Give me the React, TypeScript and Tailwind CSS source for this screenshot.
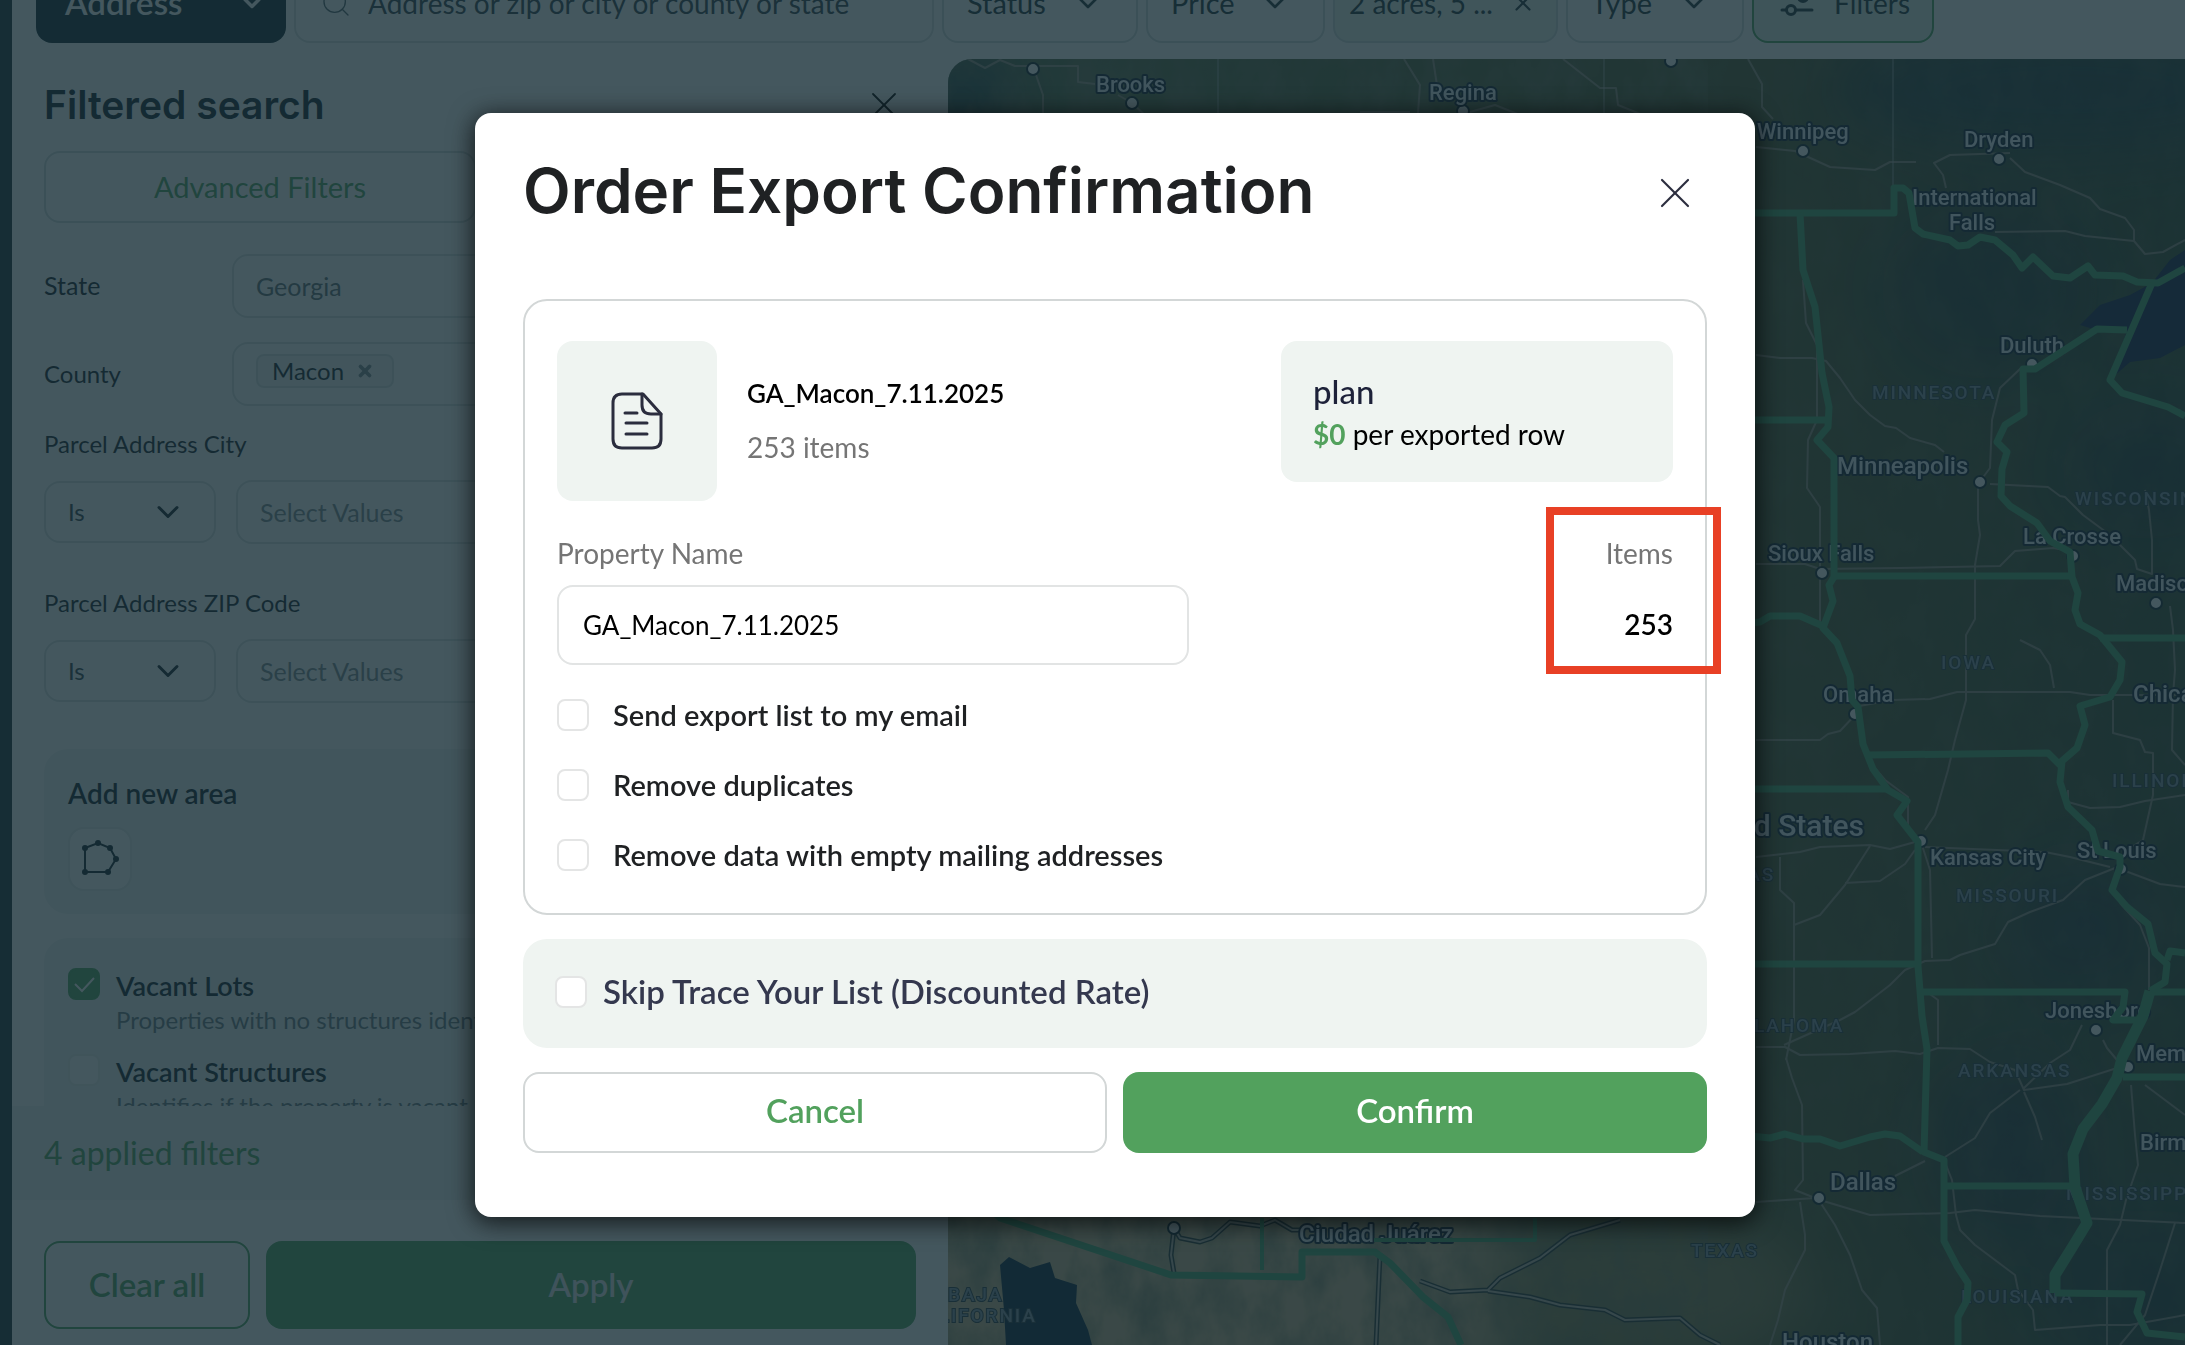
import React, { useState } from 'react';
import { ChevronDown, Search, X } from 'lucide-react';

const CITIES = [
  { name: 'Brooks', x: 1096, y: 92 },
  { name: 'Regina', x: 1429, y: 100 },
  { name: 'Winnipeg', x: 1757, y: 139 },
  { name: 'Dryden', x: 1964, y: 147 },
  { name: 'International', x: 1912, y: 205 },
  { name: 'Falls', x: 1949, y: 230 },
  { name: 'Duluth', x: 2000, y: 353 },
  { name: 'La Crosse', x: 2023, y: 544 },
  { name: 'Sioux Falls', x: 1768, y: 561 },
  { name: 'Madison', x: 2116, y: 591 },
  { name: 'Omaha', x: 1823, y: 702 },
  { name: 'Kansas City', x: 1930, y: 865 },
  { name: 'St Louis', x: 2077, y: 858 },
  { name: 'Jonesboro', x: 2045, y: 1018 },
  { name: 'Memphis', x: 2136, y: 1061 },
  { name: 'Birmingham', x: 2140, y: 1150 },
];

const BIG_CITIES = [
  { name: 'Minneapolis', x: 1837, y: 474 },
  { name: 'Chicago', x: 2133, y: 702 },
  { name: 'Dallas', x: 1830, y: 1190 },
  { name: 'Houston', x: 1782, y: 1350 },
  { name: 'Ciudad Juárez', x: 1299, y: 1242 },
];

const STATES = [
  { name: 'MINNESOTA', x: 1872, y: 399 },
  { name: 'WISCONSIN', x: 2075, y: 505 },
  { name: 'IOWA', x: 1941, y: 669 },
  { name: 'ILLINOIS', x: 2112, y: 787 },
  { name: 'MISSOURI', x: 1956, y: 902 },
  { name: 'KANSAS', x: 1690, y: 881 },
  { name: 'OKLAHOMA', x: 1725, y: 1032 },
  { name: 'ARKANSAS', x: 1958, y: 1077 },
  { name: 'MISSISSIPPI', x: 2066, y: 1200 },
  { name: 'LOUISIANA', x: 1961, y: 1303 },
  { name: 'TEXAS', x: 1691, y: 1257 },
  { name: 'BAJA', x: 948, y: 1301 },
  { name: 'CALIFORNIA', x: 910, y: 1322 },
];

const DOTS = [
  [1033, 69], [1132, 103], [1463, 111], [1671, 61], [1803, 151], [1999, 159], [2032, 364],
  [1980, 482], [2073, 556], [1822, 573], [2156, 603], [1855, 714], [1921, 841], [2121, 869],
  [2096, 1030], [2128, 1067], [1819, 1198], [1174, 1228],
];

const BORDERS = [
  'M1700 213H1894V188L1903 188L1909 193L1915 228L1923 234L1950 240L1958 246L1968 245L1980 237L1995 240L2013 255L2022 268L2033 257L2053 276L2070 278L2088 266L2095 275L2123 276L2137 282L2158 283L2185 268',
  'M2152 283L2110 380L2122 393L2168 407L2185 416',
  'M2127 330L2097 329L2035 369L2023 369L2024 413L2005 425L1997 442L2007 452L2002 469L2001 496L2010 506L2037 523L2050 541L2070 552L2072 577L2078 593L2075 610L2080 624L2100 635L2122 662L2120 680L2110 697L2080 706L2085 725L2077 748L2062 761L2060 782L2068 807L2092 830L2098 851L2120 857L2120 867L2112 890L2127 907L2148 924L2155 953L2167 964L2165 982L2150 991',
  'M1800 213L1803 270L1815 307L1822 373L1829 407L1828 427L1817 440L1834 458V577L1829 585L1833 601L1823 628L1837 643L1850 676L1852 700L1858 707L1863 744L1873 769L1888 790L1907 801L1897 815L1918 842V966L1922 1016L1927 1049L1924 1152L1944 1160V1241L1957 1266L1968 1283L1967 1300L1958 1317V1345',
  'M1700 420H1828M1834 576H2070M2100 638H2185',
  'M1740 624L1760 622L1770 616H1800L1823 626',
  'M1868 755L2048 753L2060 765M1700 789H1888M1700 964H1916',
  'M1920 992H2125L2123 1007L2113 1020H2140M2150 992H2185M2167 960L2170 951L2185 953M2123 1077H2185',
  'M1740 1135L1770 1138L1785 1134L1803 1139L1820 1139L1840 1146L1870 1137L1885 1134L1900 1136L1923 1152M1947 1186H2075',
  'M2055 1293L2142 1294L2137 1312L2147 1333L2185 1337',
  'M980 1200L1000 1218L1171 1275L1302 1277V1252H1375L1390 1263L1423 1297L1448 1317L1461 1345',
];

const RIVER = 'M2150 991L2143 1016L2122 1058L2117 1078L2102 1104L2083 1129L2073 1154L2075 1187L2087 1223L2073 1246L2055 1275V1293';

const ROADS = [
  'M968 59L985 68L1000 60L1015 66L1033 66H1078V82L1095 84M1036 75L1043 95V118M1118 95L1132 103L1148 118',
  'M1404 59L1420 85L1418 113M1433 59L1438 92M1563 59L1600 88H1616L1618 105L1650 118M1748 59L1762 84V107L1773 119',
  'M1360 112H1410M1470 112L1495 105L1520 115',
  'M1756 147L1795 151L1830 167L1875 170L1890 162L1916 162M2010 153L1950 155L1934 163L1943 175L1946 188M2010 158L2025 172L2060 185L2090 198L2100 209L2125 218L2134 230V241L2145 254L2163 252L2185 240M2134 241L2085 236L2065 231L1995 232',
  'M1756 355L1780 358H1812L1826 361L1840 378L1855 400L1870 415L1885 426L1896 428L1910 438L1935 445L1944 452M1803 280L1806 323L1817 345V420L1808 440L1807 488L1820 507L1820 625M1756 564H1805L1820 569L1900 568L2000 566L2015 551L2053 548L2070 551',
  'M2030 368L2020 369L2000 388L1992 420L1990 468L1978 484L1978 520L1980 535L1975 565V619L1966 635V700L1955 740L1948 770L1935 815L1925 830M1990 484L2048 487L2060 496L2065 497L2083 515L2110 535L2135 560L2137 569L2152 574V540L2149 510L2145 490',
  'M2020 640L2040 650L2050 665L2054 688M1854 707L1892 700L1930 699L1957 692L2070 692L2090 695H2185M2113 700V733L2140 740L2145 752L2153 753V795L2143 840L2130 848M2170 606L2173 630L2175 670L2173 695L2172 750L2185 765',
  'M1756 740H1820L1828 734L1840 731L1856 714M1868 760L1885 780L1908 797V830L1921 842L1930 870L1932 958M1756 857L1800 852L1820 847L1870 845L1890 849L1915 842M1780 857V890L1794 903V1020L1786 1060M1794 925L1820 915L1845 885L1870 846M1845 883L1880 881L1905 864L1915 850M1925 847L2045 852L2070 857L2110 867',
  'M2068 790V802L2090 808L2120 807L2145 801L2185 795M2120 866L2085 880L2063 900L2030 912L2008 922L1995 944L1960 955L1950 960L1925 961L1905 970L1890 985L1868 1002L1855 1012L1840 1020L1784 1045M2120 903L2140 925L2149 948V990M2120 869L2160 884L2185 887',
  'M1756 1047H1785L1800 1055L1850 1054L1895 1051L1920 1054L1938 1048L1970 1049L1990 1062L2015 1070L2024 1090L2067 1084L2117 1068M2024 1092L2035 1117L2042 1140M2020 1090L1990 1113L1975 1138L1945 1157M2024 1088L2050 1063L2070 1050L2082 1025M2103 1040L2107 1048L2117 1060M1927 992L1938 1000L1938 1045',
  'M1786 1058L1792 1078L1802 1105L1803 1180L1795 1190L1815 1198L1756 1202M1820 1202L1835 1225L1850 1255L1862 1290L1877 1308L1880 1345M1800 1202L1805 1235V1250L1785 1290L1778 1320L1770 1345M1820 1200L1870 1215L1950 1213L1975 1210L2040 1216L2185 1223M1944 1160L1952 1180L1956 1215L1960 1230L1975 1245L2015 1275L2018 1290L2033 1310L2035 1330L2100 1325L2130 1325L2185 1315M1895 1176L1925 1161',
  'M2131 1085L2135 1135L2138 1165L2126 1200L2120 1225L2107 1250V1345M2175 1223L2160 1270L2145 1315L2120 1345M2145 1085L2165 1100L2185 1115',
];

// drawn with a dark casing
const SOUTH_ROADS = [
  'M1174 1228L1171 1255L1174 1273M1174 1228L1180 1238L1200 1242L1212 1238L1230 1222L1260 1226L1275 1220L1292 1230H1300M1380 1255L1376 1345',
  'M1420 1281L1450 1292L1488 1290L1500 1278L1540 1258L1570 1235L1620 1220M1488 1291L1530 1297L1560 1305L1605 1310L1625 1320L1680 1318L1700 1335L1720 1345',
];

const MapView: React.FC = () => (
  <svg className="block h-full w-full" viewBox="948 59 1237 1286" preserveAspectRatio="xMinYMin slice">
    <defs>
      <linearGradient id="land" x1="0" y1="0" x2="1" y2="0">
        <stop offset="0" stopColor="#56704a" />
        <stop offset="0.65" stopColor="#50562e" />
        <stop offset="1" stopColor="#37492f" />
      </linearGradient>
      <filter id="haze" x="-30%" y="-30%" width="160%" height="160%">
        <feGaussianBlur stdDeviation="32" />
      </filter>
      <filter id="terrain" x="0" y="0" width="100%" height="100%">
        <feTurbulence type="fractalNoise" baseFrequency="0.03 0.018" numOctaves="5" seed="8" />
        <feColorMatrix values="0 0 0 0 0.15  0 0 0 0 0.17  0 0 0 0 0.1  2 0 0 0 -0.7" />
      </filter>
    </defs>
    <rect x="948" y="59" width="1237" height="1286" fill="url(#land)" />
    <g filter="url(#haze)">
      <ellipse cx="2060" cy="90" rx="230" ry="60" fill="#263c3c" />
      <ellipse cx="1990" cy="290" rx="110" ry="90" fill="#1c2e3a" opacity="0.5" />
      <ellipse cx="2150" cy="470" rx="90" ry="70" fill="#1c2e3a" opacity="0.5" />
      <ellipse cx="2080" cy="930" rx="80" ry="70" fill="#1c2e3a" opacity="0.6" />
      <ellipse cx="2010" cy="1150" rx="80" ry="100" fill="#1c2e3a" opacity="0.6" />
      <ellipse cx="2150" cy="1290" rx="120" ry="80" fill="#1c2e3a" opacity="0.5" />
      <ellipse cx="960" cy="100" rx="60" ry="50" fill="#2c4444" />
      <ellipse cx="1200" cy="1290" rx="380" ry="130" fill="#cdb68a" />
      <ellipse cx="1640" cy="1290" rx="170" ry="80" fill="#86804e" />
    </g>
    <rect x="948" y="59" width="760" height="1286" filter="url(#terrain)" opacity="0.7" />
    <rect x="1708" y="59" width="477" height="1286" filter="url(#terrain)" opacity="0.2" />
    <path d="M2080 325L2100 305L2130 295L2152 283L2170 260L2185 250V345L2160 358L2130 362L2112 378L2127 330H2097Z" fill="#141e46" />
    <path d="M1000 1265L1009 1257L1030 1268L1050 1262L1055 1278L1077 1285L1076 1303L1088 1330L1092 1345H1006L1004 1310Z" fill="#052038" />
    <g fill="none" stroke="#a89c90" strokeWidth="2" strokeLinejoin="round" opacity="0.75">
      {ROADS.map((d) => <path key={d} d={d} />)}
    </g>
    <path d="M1218 59V118M1604 59V118M1893 59V188" stroke="#b0b8b8" strokeWidth="1" opacity="0.8" />
    <g fill="none" strokeLinejoin="round">
      {SOUTH_ROADS.map((d) => <path key={d} d={d} stroke="#2a3430" strokeWidth="5" />)}
      {SOUTH_ROADS.map((d) => <path key={d} d={d} stroke="#b8aea0" strokeWidth="2" />)}
    </g>
    <g fill="#ffffff" stroke="#10202c" strokeWidth="2">
      {DOTS.map(([cx, cy]) => <circle key={`${cx}-${cy}`} cx={cx} cy={cy} r="6" />)}
    </g>
    <g fill="#8090a0" stroke="#2a3840" strokeWidth="2" paintOrder="stroke" className="font-['Roboto',sans-serif] text-[19px] font-medium tracking-widest">
      {STATES.map((s) => <text key={s.name} x={s.x} y={s.y}>{s.name}</text>)}
    </g>
    <g fill="#eef2fa" stroke="#101c30" strokeWidth="4" paintOrder="stroke" strokeLinejoin="round" className="font-['Roboto',sans-serif] font-medium">
      {CITIES.map((c) => <text key={c.name} x={c.x} y={c.y} className="text-[22px]">{c.name}</text>)}
      {BIG_CITIES.map((c) => <text key={c.name} x={c.x} y={c.y} className="text-2xl">{c.name}</text>)}
      <text x="1864" y="836" textAnchor="end" className="text-[30px]">United States</text>
    </g>
    <g fill="none" stroke="#47a468" strokeWidth="7" strokeLinejoin="round">
      {BORDERS.map((d) => <path key={d} d={d} />)}
      <path d="M1262 1218V1270M1374 1240H1535V1218" strokeWidth="4" />
      <path d={RIVER} strokeWidth="11" />
    </g>
  </svg>
);

interface CheckProps {
  label: string;
  checked: boolean;
  onChange: () => void;
}

const Check: React.FC<CheckProps> = ({ label, checked, onChange }) => (
  <label className="flex h-8 items-center gap-6 text-[29px] font-semibold text-[#1f2123]">
    <input
      type="checkbox"
      checked={checked}
      onChange={onChange}
      className="size-8 shrink-0 appearance-none rounded-lg border-2 border-[#e4e5e5] bg-white checked:bg-[#52a15d]"
    />
    <span className="whitespace-nowrap">{label}</span>
  </label>
);

const FilterRow: React.FC<{ id: string; label: string }> = ({ id, label }) => (
  <div className="flex flex-col gap-5">
    <label htmlFor={id} className="text-2xl leading-8 text-[#15222a]">{label}</label>
    <div className="flex items-center gap-5">
      <div className="grid h-[62px] w-[172px] shrink-0 items-center rounded-2xl border-2 border-[#dbe2e2]">
        <select
          aria-label={`${label} condition`}
          className="col-start-1 row-start-1 h-full w-full appearance-none bg-transparent px-[22px] text-2xl text-[#33434b]"
        >
          <option>Is</option>
        </select>
        <ChevronDown size={36} strokeWidth={2} className="pointer-events-none col-start-1 row-start-1 mr-7 justify-self-end text-[#15222a]" />
      </div>
      <input
        id={id}
        placeholder="Select Values"
        className="h-16 min-w-0 flex-1 rounded-2xl border-2 border-[#dbe2e2] bg-transparent px-[22px] text-[25px] placeholder:text-[#7f8b90]"
      />
    </div>
  </div>
);

const TopBar: React.FC = () => (
  <header className="flex h-[59px] shrink-0 items-end gap-2 overflow-hidden pb-4 pl-6 text-[28px] text-[#22323a]">
    <button className="flex h-20 w-[250px] shrink-0 items-center justify-between rounded-2xl bg-[#10252d] pl-[29px] pr-5 text-[33px] font-semibold text-white">
      Address
      <ChevronDown size={28} strokeWidth={3} />
    </button>
    <div className="flex h-20 w-[640px] shrink-0 items-center gap-4 rounded-2xl border-2 border-[#dbe2e2] px-6">
      <Search size={32} strokeWidth={1} className="shrink-0 text-[#53646b]" />
      <input
        aria-label="Search address"
        placeholder="Address or zip or city or county or state"
        className="h-full min-w-0 flex-1 bg-transparent placeholder:text-[#33434b]"
      />
    </div>
    <button className="flex h-20 w-[196px] shrink-0 items-center justify-between rounded-2xl border-2 border-[#d3dcdc] pl-[23px] pr-8 text-[29px]">
      Status <ChevronDown size={32} />
    </button>
    <button className="flex h-20 w-[179px] shrink-0 items-center justify-between rounded-2xl border-2 border-[#d3dcdc] pl-[23px] pr-8 text-[29px]">
      Price <ChevronDown size={32} />
    </button>
    <button className="flex h-20 w-[225px] shrink-0 items-center justify-between whitespace-nowrap rounded-2xl border-2 border-[#d3dcdc] bg-[#e8f3ec] pl-[14px] pr-5">
      2 acres, 5 ... <X size={26} />
    </button>
    <button className="flex h-20 w-[178px] shrink-0 items-center justify-between rounded-2xl border-2 border-[#d3dcdc] pl-[23px] pr-8 text-[29px]">
      Type <ChevronDown size={32} />
    </button>
    <button className="flex h-20 w-[182px] shrink-0 items-center gap-5 rounded-2xl border-2 border-[#4fa35e] bg-[#e0f0e6] pl-[26px]">
      <svg width="34" height="28" viewBox="0 0 34 28" fill="none" stroke="currentColor" strokeWidth="3" strokeLinecap="round">
        <path d="M2 8H18M28 8H32M2 21H6M16 21H32" />
        <circle cx="23" cy="8" r="4.5" />
        <circle cx="11" cy="21" r="4.5" />
      </svg>
      Filters
    </button>
  </header>
);

const Sidebar: React.FC = () => {
  const [lots, setLots] = useState(true);
  const [structures, setStructures] = useState(false);

  return (
    <aside className="flex w-[936px] shrink-0 flex-col">
      <div className="flex min-h-0 flex-1 flex-col overflow-hidden px-8 pt-[22px]">
        <div className="flex h-12 shrink-0 items-center justify-between pr-[10px]">
          <h2 className="font-['Inter',sans-serif] text-[39px] font-semibold text-[#10202a]">Filtered search</h2>
          <button aria-label="Close filters"><X size={44} strokeWidth={1} /></button>
        </div>
        <div className="mt-[22px] grid shrink-0 grid-cols-2 gap-2">
          <button className="h-[72px] rounded-2xl border-2 border-[#d3dcdc] text-[29px] text-[#4fa35e]">Advanced Filters</button>
        </div>

        <div className="mt-[31px] flex shrink-0 items-center text-[25px] text-[#15222a]">
          <label htmlFor="state" className="w-[188px]">State</label>
          <input id="state" defaultValue="Georgia" className="h-16 min-w-0 flex-1 rounded-2xl border-2 border-[#dbe2e2] bg-transparent px-[22px] text-[#5f6f76]" />
        </div>
        <div className="mt-6 flex shrink-0 items-center text-2xl text-[#15222a]">
          <label htmlFor="county" className="w-[188px]">County</label>
          <div className="flex h-16 flex-1 items-start rounded-2xl border-2 border-[#dbe2e2] px-[22px] pt-[10px]">
            <span className="flex h-[34px] w-[138px] shrink-0 items-center gap-3 rounded-lg border-2 border-[#dbe2e2] bg-[#f3f5f5] px-[14px]">
              Macon
              <button aria-label="Remove Macon" className="text-[#7f8b90]"><X size={18} strokeWidth={5} /></button>
            </span>
            <input id="county" className="min-w-0 flex-1 bg-transparent" />
          </div>
        </div>

        <div className="mt-[22px] flex shrink-0 flex-col gap-[43px]">
          <FilterRow id="city" label="Parcel Address City" />
          <FilterRow id="zip" label="Parcel Address ZIP Code" />
        </div>

        <section className="mt-[46px] h-[165px] shrink-0 rounded-3xl bg-[#f0f4f2] px-6 pt-[26px]">
          <h3 className="text-[28px] font-semibold leading-9 text-[#10202a]">Add new area</h3>
          <button aria-label="Draw area" className="mt-4 flex size-16 items-center justify-center rounded-2xl border-2 border-[#e3e8e8] bg-white">
            <svg width="38" height="38" viewBox="0 0 38 38" fill="#10202a" stroke="#10202a" strokeWidth="2">
              <path d="M4 8L17 3L29 8L35 19L27 32H4Z" fill="none" />
              <circle cx="4" cy="8" r="2" />
              <circle cx="17" cy="3" r="2" />
              <circle cx="29" cy="8" r="2" />
              <circle cx="35" cy="19" r="2" />
              <circle cx="27" cy="32" r="2" />
              <circle cx="4" cy="32" r="2" />
            </svg>
          </button>
        </section>

        <section className="mt-6 flex shrink-0 flex-col gap-[18px] rounded-3xl bg-[#f0f4f2] px-6 py-[30px]">
          <label className="flex items-start gap-4">
            <span className="grid shrink-0">
              <input
                type="checkbox"
                checked={lots}
                onChange={() => setLots(!lots)}
                className="col-start-1 row-start-1 size-8 appearance-none rounded-lg border-2 border-[#e3e8e8] bg-white checked:border-[#4fa35e] checked:bg-[#4fa35e]"
              />
              {lots && (
                <svg className="pointer-events-none col-start-1 row-start-1 size-8" viewBox="0 0 32 32" fill="none" stroke="#fff" strokeWidth="2">
                  <path d="M7 16L14 23L26 10" />
                </svg>
              )}
            </span>
            <span className="flex flex-col">
              <span className="text-[27px] font-semibold leading-9 text-[#10202a]">Vacant Lots</span>
              <span className="text-2xl leading-8 text-[#6b7b82]">Properties with no structures identified</span>
            </span>
          </label>
          <label className="flex items-start gap-4">
            <input
              type="checkbox"
              checked={structures}
              onChange={() => setStructures(!structures)}
              className="size-8 shrink-0 appearance-none rounded-lg border-2 border-[#e9eeec] bg-white checked:bg-[#4fa35e]"
            />
            <span className="flex flex-col">
              <span className="text-[27px] font-semibold leading-9 text-[#10202a]">Vacant Structures</span>
              <span className="text-2xl leading-8 text-[#6b7b82]">Identifies if the property is vacant</span>
            </span>
          </label>
        </section>
      </div>

      <div className="flex h-[94px] shrink-0 items-center bg-[#f0f4f2] px-8 text-[32px] text-[#4fa35e]">4 applied filters</div>
      <div className="flex shrink-0 gap-4 px-8 pb-4 pt-[41px] text-[33px] font-semibold">
        <button className="h-[88px] w-[206px] shrink-0 rounded-2xl border-2 border-[#4fa35e] text-[#4fa35e]">Clear all</button>
        <button className="h-[88px] flex-1 rounded-2xl bg-[#4fa35e] text-[#e6ebf0]">Apply</button>
      </div>
    </aside>
  );
};

const ExportModal: React.FC = () => {
  const [name, setName] = useState('GA_Macon_7.11.2025');
  const [options, setOptions] = useState({ email: false, duplicates: false, empty: false, skipTrace: false });

  const toggle = (key: keyof typeof options) => setOptions({ ...options, [key]: !options[key] });

  return (
    <div className="fixed inset-0 z-50 flex items-start justify-center bg-[#152d36]/80 pl-[45px] pt-[113px]">
      <div
        role="dialog"
        aria-labelledby="export-title"
        className="w-full max-w-[1280px] rounded-2xl bg-white px-12 pb-16 pt-[46px] shadow-[0_4px_24px_2px_rgba(0,0,0,0.7)]"
      >
        <div className="mb-[76px] flex items-center justify-between pr-[6px]">
          <h1 id="export-title" className="font-['Inter',sans-serif] text-[62px] font-semibold leading-[64px] text-[#1f2123]">
            Order Export Confirmation
          </h1>
          <button aria-label="Close" className="pt-1 text-[#2b2d3e]"><X size={52} strokeWidth={1} /></button>
        </div>

        <div className="rounded-3xl border-2 border-[#d3d7d7] px-8 pb-[42px] pt-10">
          {/* Order summary */}
          <div className="flex items-start">
            <div className="flex size-40 items-center justify-center rounded-2xl bg-[#eff4f1]">
              <svg width="54" height="60" viewBox="0 0 54 60" fill="none" stroke="#2b2d3e" strokeWidth="3" strokeLinecap="round" strokeLinejoin="round">
                <path d="M33 3H12C6 3 3 6 3 12V48C3 54 6 57 12 57H42C48 57 51 54 51 48V23Z" />
                <path d="M32 3V14C32 20 35 23 41 23H51" />
                <path d="M15 22H27M16 32H37M16 43H37" />
              </svg>
            </div>
            <div className="ml-[30px] mt-8 flex flex-col gap-[14px] text-[28px] leading-10">
              <span className="text-[26px] font-semibold text-black">{name}</span>
              <span className="text-[#757575]">253 items</span>
            </div>
            <div className="ml-auto flex h-[141px] w-[392px] flex-col rounded-2xl bg-[#eff4f1] px-8 pt-7">
              <span className="text-[33px] font-medium leading-[44px] text-[#1d2139]">plan</span>
              <span className="text-[28px] leading-[42px] text-black">
                <b className="text-[#52a15d]">$0</b> per exported row
              </span>
            </div>
          </div>

          {/* Name and item count */}
          <div className="mt-8 flex justify-between text-[28px]">
            <div className="flex w-[632px] flex-col gap-3">
              <label htmlFor="property-name" className="leading-10 text-[#757575]">Property Name</label>
              <input
                id="property-name"
                value={name}
                onChange={(e) => setName(e.target.value)}
                className="h-20 rounded-2xl border-2 border-[#e2e4e4] px-6 text-[26px] text-black"
              />
            </div>
            <div className="relative flex flex-col gap-3 text-right">
              <span className="leading-10 text-[#757575]">Items</span>
              <span className="leading-[78px] font-semibold text-black">253</span>
              <div className="pointer-events-none absolute -right-12 -top-[26px] h-[167px] w-[175px] border-8 border-[#e84025]" />
            </div>
          </div>

          <div className="mt-[34px] flex flex-col gap-[38px]">
            <Check label="Send export list to my email" checked={options.email} onChange={() => toggle('email')} />
            <Check label="Remove duplicates" checked={options.duplicates} onChange={() => toggle('duplicates')} />
            <Check label="Remove data with empty mailing addresses" checked={options.empty} onChange={() => toggle('empty')} />
          </div>
        </div>

        <label className="mt-6 flex h-[109px] items-center gap-4 rounded-3xl bg-[#eff4f1] px-8 pb-1 text-[33px] font-semibold text-[#34384e]">
          <input
            type="checkbox"
            checked={options.skipTrace}
            onChange={() => toggle('skipTrace')}
            className="size-8 shrink-0 appearance-none rounded-lg border-2 border-[#e4e5e5] bg-white checked:bg-[#52a15d]"
          />
          Skip Trace Your List (Discounted Rate)
        </label>

        <div className="mt-6 grid grid-cols-2 gap-4 text-[33px] font-semibold">
          <button className="h-[81px] rounded-2xl border-2 border-[#d3d7d7] pb-1 text-[#52a15d]">Cancel</button>
          <button className="h-[81px] rounded-2xl bg-[#52a15d] pb-1 text-white">Confirm</button>
        </div>
      </div>
    </div>
  );
};

const App: React.FC = () => {
  return (
    <div className="flex h-screen overflow-hidden bg-white font-['Lato',sans-serif]">
      <div className="w-3 shrink-0 bg-[#192d35]" />
      <div className="flex min-w-0 flex-1 flex-col">
        <TopBar />
        <div className="flex min-h-0 flex-1">
          <Sidebar />
          <main className="min-w-0 flex-1 overflow-hidden rounded-tl-3xl">
            <MapView />
          </main>
        </div>
      </div>
      <ExportModal />
    </div>
  );
};

export default App;
